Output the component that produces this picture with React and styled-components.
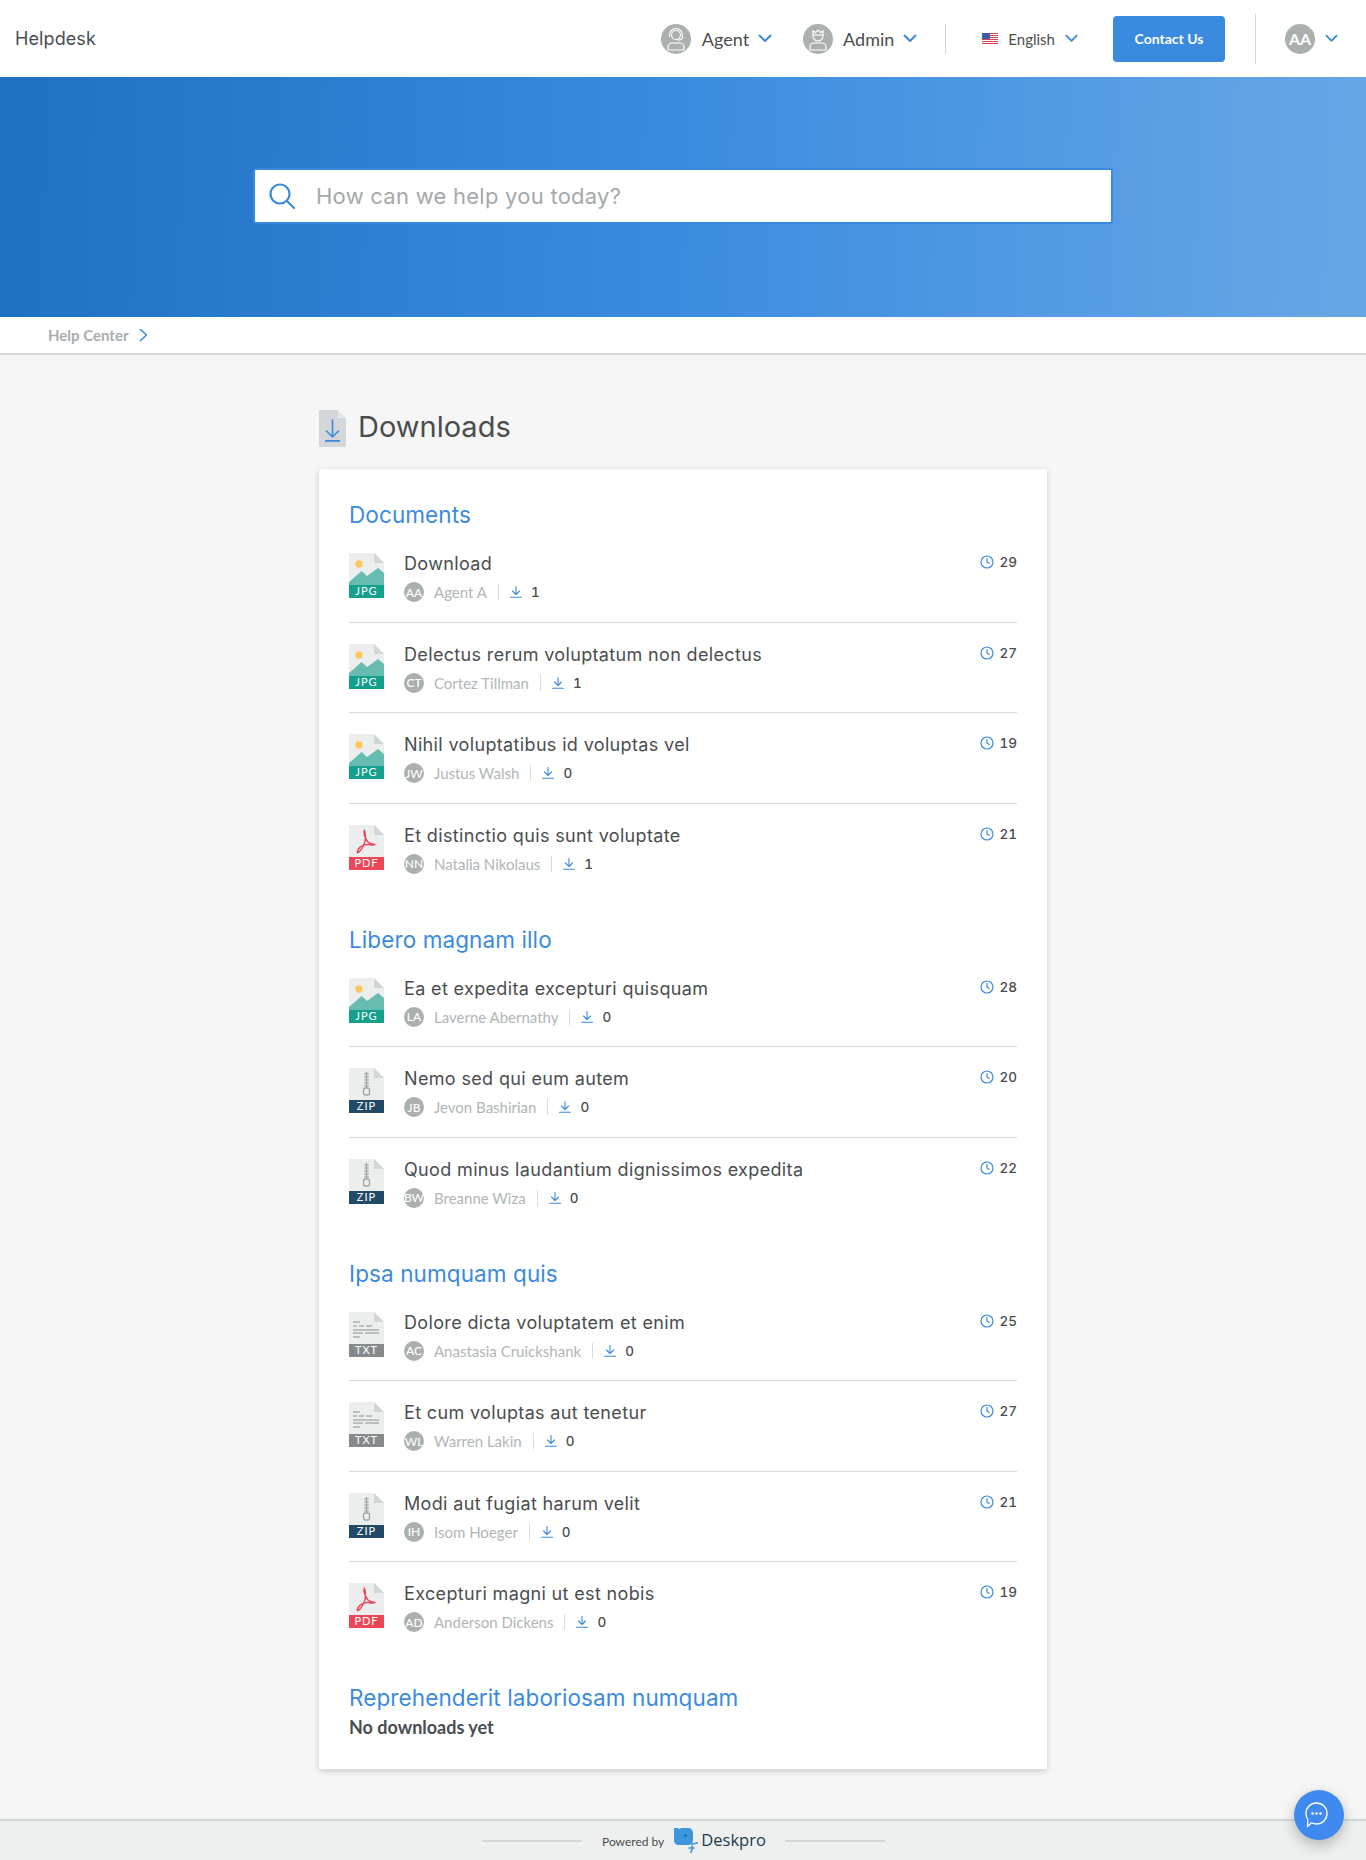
import React from 'react';
import styled, { createGlobalStyle } from 'styled-components';

const Global = createGlobalStyle`
  html, body { margin: 0; padding: 0; background: #f6f6f6; }
  body { font-family: Lato, "Liberation Sans", sans-serif; color: #4a4d50; }
  * { box-sizing: border-box; }
`;

const Page = styled.div`
  position: relative;
  width: 1366px;
  height: 1860px;
  display: flex;
  flex-direction: column;
`;

const Header = styled.header`
  height: 77px;
  background: #fff;
  display: flex;
  align-items: center;
  padding: 0 28px 0 15px;
`;
const Brand = styled.div`
  font-family: Inter, sans-serif;
  font-size: 18px;
  color: #4a4d50;
  margin-right: auto;
  letter-spacing: 0.1px;
`;
const NavItem = styled.div`
  display: flex;
  align-items: center;
  gap: ${p => p.$gap || 0}px;
  margin-right: ${p => p.$mr || 0}px;
`;
const NavLabel = styled.span`
  font-size: ${p => p.$size || 18}px;
  color: #4a4d50;
  margin-left: ${p => p.$ml || 11}px;
  margin-right: ${p => p.$mrr || 9}px;
`;
const Avatar = styled.div`
  width: ${p => p.$size}px;
  height: ${p => p.$size}px;
  border-radius: 50%;
  background: #a9b0ae;
  color: #fff;
  display: flex;
  align-items: center;
  justify-content: center;
  flex: none;
  font-family: Lato, sans-serif;
  font-size: ${p => p.$font}px;
  font-weight: ${p => p.$weight || 500};
`;
const VLine = styled.div`
  width: 1px;
  height: ${p => p.$h}px;
  background: #d4d8d8;
  margin-right: ${p => p.$mr}px;
`;
const Contact = styled.button`
  width: 112px;
  height: 46px;
  border: 0;
  border-radius: 4px;
  background: #3a8bdf;
  color: #fff;
  font-family: Lato, sans-serif;
  font-weight: 700;
  font-size: 14px;
  margin-right: 30px;
  padding: 0;
`;

const Hero = styled.section`
  height: 240px;
  background: linear-gradient(92deg, #1f70c1 0%, #3b8cdf 50%, #68a7e6 100%);
  display: flex;
  justify-content: center;
  padding-top: 91px;
`;
const Search = styled.div`
  width: 860px;
  height: 56px;
  background: #fff;
  border: 2px solid #3a8bdf;
  border-radius: 3px;
  display: flex;
  align-items: center;
  padding-left: 13px;
`;
const SearchText = styled.span`
  font-family: Inter, sans-serif;
  font-size: 22px;
  letter-spacing: 0.25px;
  color: #a4a9ab;
  margin: 0 0 1px 20px;
`;

const Breadcrumb = styled.nav`
  height: 38px;
  background: #fff;
  border-bottom: 2px solid #d3d8d8;
  display: flex;
  align-items: center;
  padding-left: 48px;
`;
const Crumb = styled.span`
  font-size: 15px;
  font-weight: 700;
  color: #a8aeb1;
  margin-right: 11px;
`;

const Main = styled.main`
  flex: 1;
  width: 728px;
  margin-left: 319px;
  padding-top: 54px;
`;
const TitleRow = styled.div`
  display: flex;
  align-items: center;
  height: 38px;
  margin-bottom: 22px;
`;
const Title = styled.h1`
  font-family: Inter, sans-serif;
  font-size: 29px;
  font-weight: 400;
  color: #4a4d50;
  margin: 0 0 3px 12px;
`;
const Card = styled.div`
  background: #fff;
  height: 1300px;
  padding: 31px 30px;
  box-shadow: 0 2px 6px rgba(0, 0, 0, 0.18);
  border-radius: 2px;
`;
const Section = styled.section`
  margin-bottom: ${p => p.$mb ?? 42}px;
`;
const SectionTitle = styled.h2`
  font-family: Inter, sans-serif;
  font-size: 22.5px;
  letter-spacing: 0.1px;
  font-weight: 400;
  line-height: 30px;
  color: #3a8bdf;
  margin: 0 0 ${p => p.$mb ?? 2}px;
`;
const Row = styled.div`
  height: ${p => (p.$last ? 79 : 90.5)}px;
  display: flex;
  align-items: flex-start;
  padding-top: 20px;
  border-bottom: ${p => (p.$last ? 0 : '1px solid #d8dcdc')};
`;
const IconBox = styled.div`
  width: 35px;
  height: 44px;
  flex: none;
  margin: 1px 20px 0 0;
`;
const Body = styled.div`
  flex: 1;
  min-width: 0;
`;
const ItemTitle = styled.div`
  font-family: Inter, sans-serif;
  font-size: 18px;
  letter-spacing: 0.35px;
  line-height: 24px;
  color: #4a4d50;
  margin-bottom: 6px;
`;
const Meta = styled.div`
  display: flex;
  align-items: center;
  height: 20px;
`;
const Author = styled.span`
  font-size: 15px;
  color: #b0b6b8;
  margin-left: 10px;
`;
const MetaSep = styled.span`
  width: 1px;
  height: 16px;
  background: #d8dcdc;
  margin: 0 11px 0 11px;
`;
const Count = styled.span`
  font-family: Inter, sans-serif;
  font-size: 13.5px;
  font-weight: 500;
  font-variant-numeric: tabular-nums;
  color: #4a4d50;
  margin-left: 9px;
`;
const Days = styled.div`
  display: flex;
  align-items: center;
  height: 20px;
  flex: none;
  font-family: Inter, sans-serif;
  font-size: 13.5px;
  font-weight: 500;
  font-variant-numeric: tabular-nums;
  color: #4a4d50;
  gap: 6px;
`;
const Empty = styled.div`
  font-size: 18px;
  font-weight: 700;
  color: #4a4d50;
  margin-top: 3px;
`;

const Footer = styled.footer`
  height: 41px;
  background: #eef0f0;
  border-top: 2px solid #d3d8d8;
  display: flex;
  align-items: center;
  padding-left: 482px;
`;
const FootLine = styled.div`
  width: 100px;
  height: 2px;
  background: #d3d7d7;
`;
const Powered = styled.span`
  font-size: 12px;
  color: #4a4d50;
  margin: 1px 10px 0 20px;
`;
const Deskpro = styled.span`
  font-family: "Open Sans", sans-serif;
  font-size: 16.5px;
  color: #223a4e;
  margin: 0 19px 2px 3px;
`;
const Chat = styled.div`
  position: absolute;
  left: 1294px;
  top: 1790px;
  width: 50px;
  height: 50px;
  border-radius: 50%;
  background: #3f8af0;
  box-shadow: 0 5px 14px rgba(0, 0, 0, 0.25);
  display: flex;
  align-items: center;
  justify-content: center;
  padding-right: 6px;
`;

const Chevron = ({ w = 14 }) => (
  <svg width={w} height="9" viewBox="0 0 14 9" fill="none" stroke="#3a8bdf" strokeWidth="2" strokeLinecap="round" strokeLinejoin="round">
    <path d="M1.5 1.5 7 7l5.5-5.5" />
  </svg>
);

const AgentGlyph = () => (
  <svg width="22" height="24" viewBox="0 0 22 24" fill="none" stroke="#fff" strokeWidth="1.2">
    <circle cx="11" cy="8" r="4.5" />
    <path d="M4.500 10V8a6.500 6.500 0 0 1 13 0v2.500c0 1.500-2 2.500-5 2.500" />
    <path d="M3 23v-3a4 4 0 0 1 4-4h8a4 4 0 0 1 4 4v3z" />
  </svg>
);
const AdminGlyph = () => (
  <svg width="22" height="24" viewBox="0 0 22 24" fill="none" stroke="#fff" strokeWidth="1.2">
    <path d="M6 4l2.500 1.500L11 3l2.500 2.500L16 4v5a5 5 0 0 1-10 0z" />
    <path d="M6 8h10" />
    <path d="M3 23v-3a4 4 0 0 1 4-4h8a4 4 0 0 1 4 4v3z" />
  </svg>
);
const Flag = () => (
  <svg width="16" height="11" viewBox="0 0 16 11">
    <rect width="16" height="11" fill="#fff" />
    {[0, 2, 4, 6, 8, 10].map(y => <rect key={y} y={y} width="16" height="1" fill="#d9434e" />)}
    <rect width="8" height="6" fill="#3f5aa8" />
  </svg>
);
const SearchIcon = () => (
  <svg width="28" height="28" viewBox="0 0 28 28" fill="none" stroke="#3a8bdf" strokeWidth="2.2" strokeLinecap="round">
    <circle cx="12" cy="12" r="9.500" />
    <path d="M19 19l7 7" />
  </svg>
);
const CrumbArrow = () => (
  <svg width="9" height="14" viewBox="0 0 9 14" fill="none" stroke="#3a8bdf" strokeWidth="1.6" strokeLinecap="round" strokeLinejoin="round">
    <path d="M1.500 1.500 7.500 7l-6 5.500" />
  </svg>
);
const DownloadsIcon = () => (
  <svg width="27" height="37" viewBox="0 0 27 37">
    <path d="M1.500 0H19l8 8v27.500a1.500 1.500 0 0 1-1.500 1.500h-24A1.500 1.500 0 0 1 0 35.500v-34A1.500 1.500 0 0 1 1.500 0z" fill="#d3d7da" />
    <path d="M19 0l8 8h-8z" fill="#f6f6f6" />
    <path d="M19.500 1l6.500 6.500h-6.500z" fill="#e2e4e6" />
    <path d="M13.500 10v17M7.500 21l6 6 6-6" fill="none" stroke="#3a8bdf" strokeWidth="1.6" strokeLinecap="round" strokeLinejoin="round" />
    <rect x="6" y="30" width="15" height="1.800" fill="#3a8bdf" />
  </svg>
);

const FileBase = ({ children, color, label }) => (
  <svg width="35" height="45" viewBox="0 0 35 45">
    <path d="M1 0h24l10 10v34a1 1 0 0 1-1 1H1a1 1 0 0 1-1-1V1a1 1 0 0 1 1-1z" fill="#eceeee" />
    <path d="M25 0l10 10H25z" fill="#d2d6d8" />
    {children}
    <rect y="32" width="35" height="13" fill={color} />
    <text x="17.500" y="42.300" textAnchor="middle" fontFamily="Lato, sans-serif" fontSize="11" letterSpacing="1" fill="#fff">{label}</text>
  </svg>
);
const FileIcon = ({ type }) => {
  if (type === 'jpg') {
    return (
      <FileBase color="#14a08d" label="JPG">
        <circle cx="10" cy="11" r="3.700" fill="#fcc75f" />
        <path d="M0 29L12.700 18 18 23 29 15l6 5v12H0z" fill="#66bcb1" />
      </FileBase>
    );
  }
  if (type === 'pdf') {
    return (
      <FileBase color="#ec4757" label="PDF">
        <path d="M15.300 5c-1 3 .8 8.500 3.700 12 2 2.200 5 2.200 7 2.500-1 .8-3 .5-5 .2-4-.5-8 .8-10 2.500-1 1-2.800 4-2.500 5.500 2-.5 5-5 6.800-9 1.500-3.500 1.500-10 0-13.700z" fill="none" stroke="#ec4757" strokeWidth="1.500" strokeLinejoin="round" />
      </FileBase>
    );
  }
  if (type === 'zip') {
    return (
      <FileBase color="#214a66" label="ZIP">
        <path d="M15 6h5M15 9h5M15 12h5M15 15h5M15 18h5" stroke="#9ea4a6" strokeWidth="1.200" />
        <path d="M17.500 4v16" stroke="#9ea4a6" strokeWidth="1.400" />
        <rect x="14.500" y="20" width="6" height="7" rx="2" fill="none" stroke="#9ea4a6" strokeWidth="1.300" />
      </FileBase>
    );
  }
  return (
    <FileBase color="#858b8c" label="TXT">
      <path d="M4 10h7M4 14h4M10 14h5M17 14h6M4 18h26M4 21h10M16 21h14M4 25h7" stroke="#a9aeb0" strokeWidth="1.300" />
    </FileBase>
  );
};
const ClockIcon = () => (
  <svg width="14" height="14" viewBox="0 0 14 14" fill="none" stroke="#3a8bdf" strokeWidth="1.200" strokeLinecap="round">
    <circle cx="7" cy="7" r="6" />
    <path d="M7 3.500V7l2.200 1.400" />
  </svg>
);
const DownIcon = () => (
  <svg width="12" height="12" viewBox="0 0 12 12" fill="none" stroke="#3a8bdf" strokeWidth="1.100" strokeLinecap="round" strokeLinejoin="round">
    <path d="M6 0.500v7.500M2.500 5l3.500 3.500L9.500 5M0.500 11.200h11" />
  </svg>
);
const ChatIcon = () => (
  <svg width="23" height="26" viewBox="0 0 23 26" fill="none">
    <path d="M11.500 1C17.300 1 22 5.500 22 11.500S17.300 22 11.500 22c-1.800 0-3.600-.4-5-1.200L2.500 24.500 2.800 17.500C1.600 15.800 1 13.700 1 11.500 1 5.500 5.700 1 11.500 1z" stroke="#fff" strokeWidth="1.300" strokeLinejoin="round" />
    <circle cx="7.500" cy="11.500" r="1.300" fill="#fff" /><circle cx="11.500" cy="11.500" r="1.300" fill="#fff" /><circle cx="15.500" cy="11.500" r="1.300" fill="#fff" />
  </svg>
);
const DeskproLogo = () => (
  <svg width="24" height="25" viewBox="0 0 24 25">
    <path d="M0 0h4c1 1.300 2 1.300 3 0h7c3 0 5 2 5 5v7c0 3-2 5-5 5H5c-3 0-5-2-5-5z" fill="#3d95dc" />
    <circle cx="11.500" cy="7.500" r="1.200" fill="#1f5f99" />
    <path d="M18 16.300l6-1.500M15 20h5M18 18c.5 3-.5 5-1 6.500" fill="none" stroke="#3d95dc" strokeWidth="1.600" strokeLinecap="round" />
  </svg>
);

const sections = [
  {
    title: 'Documents',
    items: [
      ['Download', 'Agent A', 'AA', 1, 29, 'jpg'],
      ['Delectus rerum voluptatum non delectus', 'Cortez Tillman', 'CT', 1, 27, 'jpg'],
      ['Nihil voluptatibus id voluptas vel', 'Justus Walsh', 'JW', 0, 19, 'jpg'],
      ['Et distinctio quis sunt voluptate', 'Natalia Nikolaus', 'NN', 1, 21, 'pdf'],
    ],
  },
  {
    title: 'Libero magnam illo',
    items: [
      ['Ea et expedita excepturi quisquam', 'Laverne Abernathy', 'LA', 0, 28, 'jpg'],
      ['Nemo sed qui eum autem', 'Jevon Bashirian', 'JB', 0, 20, 'zip'],
      ['Quod minus laudantium dignissimos expedita', 'Breanne Wiza', 'BW', 0, 22, 'zip'],
    ],
  },
  {
    title: 'Ipsa numquam quis',
    items: [
      ['Dolore dicta voluptatem et enim', 'Anastasia Cruickshank', 'AC', 0, 25, 'txt'],
      ['Et cum voluptas aut tenetur', 'Warren Lakin', 'WL', 0, 27, 'txt'],
      ['Modi aut fugiat harum velit', 'Isom Hoeger', 'IH', 0, 21, 'zip'],
      ['Excepturi magni ut est nobis', 'Anderson Dickens', 'AD', 0, 19, 'pdf'],
    ],
  },
];

export default function App() {
  return (
    <Page>
      <Global />
      <Header>
        <Brand>Helpdesk</Brand>
        <NavItem $mr={31}>
          <Avatar $size={30}><AgentGlyph /></Avatar>
          <NavLabel>Agent</NavLabel>
          <Chevron />
        </NavItem>
        <NavItem $mr={28}>
          <Avatar $size={30}><AdminGlyph /></Avatar>
          <NavLabel $ml={10}>Admin</NavLabel>
          <Chevron />
        </NavItem>
        <VLine $h={30} $mr={36} />
        <NavItem $mr={35}>
          <Flag />
          <NavLabel $size={15} $ml={10} $mrr={10}>English</NavLabel>
          <Chevron w={13} />
        </NavItem>
        <Contact>Contact Us</Contact>
        <VLine $h={50} $mr={29} />
        <NavItem $gap={10}>
          <Avatar $size={30} $font={16} $weight={700}>AA</Avatar>
          <Chevron w={13} />
        </NavItem>
      </Header>
      <Hero>
        <Search>
          <SearchIcon />
          <SearchText>How can we help you today?</SearchText>
        </Search>
      </Hero>
      <Breadcrumb>
        <Crumb>Help Center</Crumb>
        <CrumbArrow />
      </Breadcrumb>
      <Main>
        <TitleRow>
          <DownloadsIcon />
          <Title>Downloads</Title>
        </TitleRow>
        <Card>
          {sections.map(s => (
            <Section key={s.title}>
              <SectionTitle>{s.title}</SectionTitle>
              {s.items.map((it, i) => (
                <Row key={it[0]} $last={i === s.items.length - 1}>
                  <IconBox><FileIcon type={it[5]} /></IconBox>
                  <Body>
                    <ItemTitle>{it[0]}</ItemTitle>
                    <Meta>
                      <Avatar $size={20} $font={12}>{it[2]}</Avatar>
                      <Author>{it[1]}</Author>
                      <MetaSep />
                      <DownIcon />
                      <Count>{it[3]}</Count>
                    </Meta>
                  </Body>
                  <Days><ClockIcon />{it[4]}</Days>
                </Row>
              ))}
            </Section>
          ))}
          <Section $mb={0}>
            <SectionTitle $mb={0}>Reprehenderit laboriosam numquam</SectionTitle>
            <Empty>No downloads yet</Empty>
          </Section>
        </Card>
      </Main>
      <Footer>
        <FootLine />
        <Powered>Powered by</Powered>
        <DeskproLogo />
        <Deskpro>Deskpro</Deskpro>
        <FootLine />
      </Footer>
      <Chat><ChatIcon /></Chat>
    </Page>
  );
}
